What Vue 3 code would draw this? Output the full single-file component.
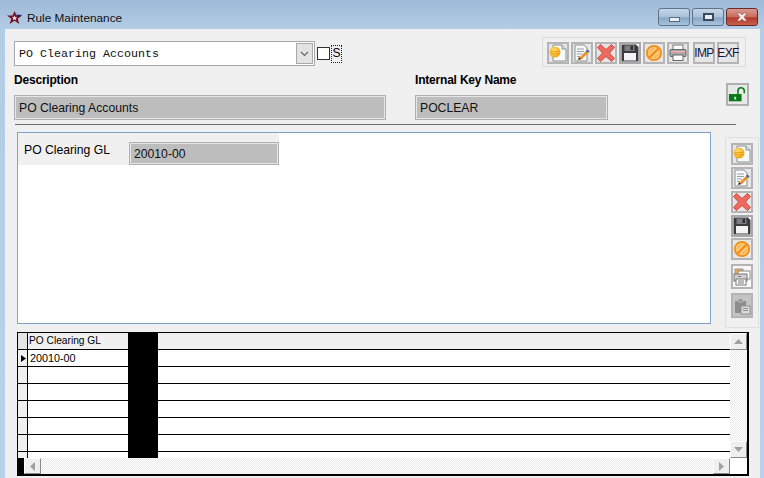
<script setup>
const topTools = [
  { key: 'new' }, { key: 'edit' }, { key: 'del' }, { key: 'save', active: true }, { key: 'cancel' }, { key: 'print' }
]
const sideTools = [
  { key: 'new', cls: 'tall' }, { key: 'edit', cls: 'tall' }, { key: 'del', cls: 'tall' },
  { key: 'save', cls: 'active tall' }, { key: 'cancel', cls: 'tall snug' },
  { key: 'copy', cls: 'big light' }, { key: 'paste', cls: 'big dim' }
]
const rows = ['20010-00', '', '', '', '', '']
</script>

<template>
  <div class="window">
    <header class="titlebar">
      <svg class="logo" width="15" height="15" viewBox="0 0 15 15">
        <path d="M7.500 1l1.900 4.600H15l-4.300 3.200L12.400 14 7.500 10.800 2.600 14l1.700-5.200L0 5.600h5.600z" fill="#7a0e1e" />
        <path d="M7.500 5.200l.8 2h2L8.700 8.500l.6 2-1.800-1.200-1.800 1.200.6-2-1.600-1.300h2z" fill="#e6e6ee" />
        <path d="M8.500 .5l1.200 4.300h5.300l-2.600 2.200-2.700-1.200z" fill="#1c2268" />
      </svg>
      <span class="title">Rule Maintenance</span>
      <div class="controls">
        <button class="ctl"><i class="min"></i></button>
        <button class="ctl"><i class="max"></i></button>
        <button class="ctl close">
          <svg width="14" height="10" viewBox="0 0 14 10"><path d="M2 1h3l2 2 2-2h3L9 5l3 4H9L7 7 5 9H2l3-4z" fill="#f4eeee" stroke="#8a4a44" stroke-width=".5" /></svg>
        </button>
      </div>
    </header>

    <main class="client">
      <div class="top-row">
        <div class="combo">
          <span>PO Clearing Accounts</span>
          <span class="combo-btn">
            <svg width="9" height="6" viewBox="0 0 9 6"><path d="M1 1l3.500 3.500L8 1" fill="none" stroke="#666" stroke-width="1.200" /></svg>
          </span>
        </div>
        <span class="check"></span>
        <span class="check-label">S</span>
        <div class="toolbar">
          <button v-for="t in topTools" :key="t.key" class="tool" :class="{ active: t.active }">
            <svg width="18" height="18" viewBox="0 0 18 18"><use :href="'#ic-' + t.key" /></svg>
          </button>
          <button class="tool text gap">IMP</button>
          <button class="tool text">EXF</button>
        </div>
      </div>

      <div class="field-row">
        <div class="field desc">
          <label>Description</label>
          <div class="ro">PO Clearing Accounts</div>
        </div>
        <div class="field key">
          <label>Internal Key Name</label>
          <div class="ro">POCLEAR</div>
        </div>
        <button class="lock">
          <svg width="21" height="19" viewBox="0 0 21 19">
            <rect x="1" y="9" width="14" height="8" fill="#067a16" />
            <rect x="7" y="12" width="2" height="3" fill="#e8f4e8" />
            <path d="M11 9V5.500a3.500 3.500 0 0 1 7 0V8" fill="none" stroke="#067a16" stroke-width="1.700" />
          </svg>
        </button>
      </div>

      <hr class="rule" />

      <div class="mid-row">
        <section class="panel">
          <div class="panel-field">
            <span class="panel-label">PO Clearing GL</span>
            <div class="ro small">20010-00</div>
          </div>
        </section>
        <aside class="side">
          <button v-for="t in sideTools" :key="t.key" class="tool" :class="t.cls">
            <svg width="18" height="18" viewBox="0 0 18 18"><use :href="'#ic-' + t.key" /></svg>
          </button>
        </aside>
      </div>

      <section class="grid">
        <div class="grid-body">
          <div class="row head">
            <span class="ind"></span>
            <span class="c1">PO Clearing GL</span>
            <span class="c2"></span>
            <span class="c3"></span>
          </div>
          <div v-for="(r, i) in rows" :key="i" class="row">
            <span class="ind"><svg v-if="i === 0" width="5" height="7" viewBox="0 0 5 7"><path d="M0 0l5 3.500L0 7z" fill="#000" /></svg></span>
            <span class="c1 val">{{ r }}</span>
            <span class="c2"></span>
            <span class="c3"></span>
          </div>
          <div class="row tail">
            <span class="ind"></span>
            <span class="c1"></span>
            <span class="c2"></span>
            <span class="c3"></span>
          </div>
        </div>
        <div class="vscroll">
          <span class="sb-btn"><svg width="9" height="5" viewBox="0 0 9 5"><path d="M0 5L4.500 0 9 5z" fill="#a0a0a0" /></svg></span>
          <span class="sb-btn"><svg width="9" height="5" viewBox="0 0 9 5"><path d="M0 0L4.500 5 9 0z" fill="#a0a0a0" /></svg></span>
        </div>
        <div class="hscroll">
          <span class="black-foot"></span>
          <span class="sb-btn"><svg width="5" height="9" viewBox="0 0 5 9"><path d="M5 0L0 4.500 5 9z" fill="#a0a0a0" /></svg></span>
          <span class="sb-btn"><svg width="5" height="9" viewBox="0 0 5 9"><path d="M0 0L5 4.500 0 9z" fill="#a0a0a0" /></svg></span>
        </div>
        <div class="corner"></div>
      </section>
    </main>

    <svg class="defs" width="0" height="0">
      <defs>
        <radialGradient id="coin" cx=".4" cy=".35" r=".7"><stop offset="0" stop-color="#ffe070" /><stop offset="1" stop-color="#f0a010" /></radialGradient>
        <symbol id="ic-new" viewBox="0 0 18 18">
          <path d="M4 1h9l4 4v12H4z" fill="#f6fbfd" stroke="#8a8f94" />
          <path d="M13 1v4h4" fill="#d8e2e8" stroke="#8a8f94" />
          <circle cx="6" cy="8" r="5.500" fill="url(#coin)" />
          <path d="M1.500 7.500h9M1.500 9.500h9" stroke="#e89a10" stroke-width=".8" />
        </symbol>
        <symbol id="ic-edit" viewBox="0 0 18 18">
          <path d="M2 1h9l3 3v13H2z" fill="#f6f9fb" stroke="#8a8f94" />
          <path d="M4 5h7M4 7.500h7M4 10h5M4 12.500h3" stroke="#9aa0a8" />
          <path d="M14.500 5.500l2 2-7.500 7.500-3 1 1-3z" fill="#f09020" />
          <path d="M14.500 5.500l2 2-1.500 1.500-2-2z" fill="#2a70c8" />
          <path d="M6 13l-1 3 3-1z" fill="#402010" />
        </symbol>
        <symbol id="ic-del" viewBox="0 0 18 18">
          <path d="M.5 3.500L3.500.5 9 5.500l5.500-5L17.500 3.500 12.500 9l5 5.500-3 3L9 12.500l-5.500 5-3-3L5.500 9z" fill="#ef6a5e" stroke="#cc4a40" />
        </symbol>
        <symbol id="ic-save" viewBox="0 0 18 18">
          <path d="M.5.5h14.500l2.500 2.500v14.500H.5z" fill="#3c3c40" />
          <rect x="3.500" y="1.500" width="10" height="5.500" fill="#7e7e82" />
          <rect x="9.500" y="2" width="2.500" height="4" fill="#303034" />
          <rect x="3" y="9" width="12" height="7.500" fill="#f4f4f4" />
        </symbol>
        <symbol id="ic-cancel" viewBox="0 0 18 18">
          <circle cx="9" cy="9" r="7.200" fill="#fcc878" stroke="#f28c14" stroke-width="1.800" />
          <path d="M4.500 13.500l9-9" stroke="#f28c14" stroke-width="2.200" />
          <path d="M4 8.500l4.500-4.500M9.500 14l4.500-4.500" stroke="#f7a63c" />
        </symbol>
        <symbol id="ic-print" viewBox="0 0 18 18">
          <rect x="4" y="1" width="10" height="5" fill="#fff" stroke="#777" />
          <rect x="1" y="5.500" width="16" height="7" rx="1" fill="#a8a8a8" stroke="#666" />
          <rect x="2" y="7" width="14" height="1.500" fill="#f0a8a8" />
          <rect x="4" y="11" width="10" height="5.500" fill="#fff" stroke="#666" />
        </symbol>
        <symbol id="ic-copy" viewBox="0 0 18 18">
          <rect x="2" y="1" width="8" height="5" fill="#f4a848" stroke="#999" />
          <rect x="5" y="3" width="12" height="8" fill="#fff" stroke="#888" />
          <rect x="1" y="6" width="13" height="7" fill="#d0d0d0" stroke="#777" />
          <rect x="3" y="11" width="10" height="6" fill="#fff" stroke="#777" />
          <path d="M5 8.500h3M5 13h6M5 15h6" stroke="#777" />
        </symbol>
        <symbol id="ic-paste" viewBox="0 0 18 18">
          <path d="M2 4h11v12H2z" fill="#8e8e8e" />
          <rect x="5" y="2" width="5" height="3" rx="1" fill="#8e8e8e" stroke="#bdbdbd" />
          <rect x="8" y="9" width="9" height="8" fill="#dcdcdc" stroke="#8e8e8e" />
          <path d="M10 11.500h5M10 13.500h5" stroke="#8e8e8e" />
        </symbol>
      </defs>
    </svg>
  </div>
</template>

<style scoped>
* { box-sizing: border-box; }
.window {
  width: 764px; height: 478px; overflow: hidden; display: flex; flex-direction: column;
  background: linear-gradient(180deg, #9db9d6 0, #b4cde6 29px, #b9d1ea 100%);
  font-family: "Liberation Sans", Arial, sans-serif; font-size: 12px; color: #000;
}
.defs { position: absolute; }
button { padding: 0; margin: 0; font: inherit; }

.titlebar { height: 29px; flex: none; display: flex; align-items: flex-start; padding-left: 7px; }
.logo { margin-top: 10px; }
.title { margin: 11px 0 0 5px; font-size: 11.800px; line-height: 14px; color: #111; }
.controls { margin-left: auto; margin-right: 6px; margin-top: 8px; display: flex; gap: 2px; }
.ctl {
  width: 32px; height: 18px; display: flex; align-items: center; justify-content: center;
  border: 1px solid #5f7488; border-radius: 3px;
  background: linear-gradient(180deg, #c4d6e8 0, #a9c1d8 50%, #88a6c3 55%, #a7c3dd 100%);
}
.ctl.close { border-color: #6a2a28; background: linear-gradient(180deg, #d99a90 0, #c86a5c 50%, #b03a28 55%, #c8604c 100%); }
.min { width: 11px; height: 5px; margin-top: 4px; background: #e8eef4; border: 1px solid #5a6a7c; }
.max { width: 11px; height: 8px; background: #e8eef4; border: 2px solid #3a4a5c; display: block; }

.client { flex: 1; min-height: 0; margin: 0 4px 0 5px; background: #f0f0f0; padding: 8px 0 0 9px; }

.top-row { display: flex; align-items: center; height: 30px; }
.combo {
  width: 301px; height: 25px; margin-top: 3px; background: #fff; border: 1px solid #a8a8a8;
  display: flex; align-items: center; justify-content: space-between; padding: 0 1px 0 4px;
  font-family: "Liberation Mono", "Courier New", monospace; font-size: 11.670px; color: #111;
}
.combo-btn { width: 17px; height: 21px; background: #e3e3e3; border: 1px solid #a9a9a9; display: flex; align-items: center; justify-content: center; }
.check { width: 13px; height: 13px; margin: 3px 0 0 2px; background: #fff; border: 1px solid #333; }
.check-label { margin: 3px 0 0 1px; width: 11px; height: 18px; line-height: 16px; text-align: center; outline: 1px dotted #222; outline-offset: -1px; font-size: 12px; }

.toolbar {
  margin-left: auto; margin-right: 14px; width: 204px; height: 30px; border: 1px solid #dcdcdc;
  display: flex; align-items: center; gap: 2px; padding: 1px 0 0 4px;
}
.tool {
  width: 22px; height: 22px; flex: none; display: flex; align-items: center; justify-content: center;
  background: #e6e6e6; border: 2px solid #b4b4b4;
}
.tool.active { background: #fdfdfd; border-color: #a8a8a8; }
.tool.text { background: #e6e6e6; font-size: 12px; letter-spacing: -.6px; color: #14143c; }
.tool.gap { margin-left: 2px; }

.field-row { display: flex; margin-top: 5px; height: 51px; }
.field label { display: block; margin-top: 1px; font-weight: bold; font-size: 12px; line-height: 14px; letter-spacing: -.2px; color: #000; }
.field.desc { width: 401px; }
.field.key { width: 311px; }
.ro {
  margin-top: 8px; height: 25px; background: #bdbdbd; border: 2px solid #e6e6e6; outline: 1px solid #b0b0b0; outline-offset: -1px;
  padding: 0 3px; line-height: 23px; font-size: 12.200px; color: #111;
}
.desc .ro { width: 372px; }
.key .ro { width: 193px; }
.lock { width: 23px; height: 23px; margin-top: 11px; display: flex; align-items: center; justify-content: center; background: #e8e8e8; border: 2px solid #b0b0b0; }

.rule { margin: 1px 0 0 1px; width: 721px; height: 1px; background: #6e6e6e; border: 0; }

.mid-row { display: flex; margin-top: 7px; margin-left: 3px; height: 196px; }
.panel { width: 694px; height: 192px; background: #fff; border: 1px solid #7fa3c6; }
.panel-field { width: 261px; height: 32px; background: #f0f0f0; padding: 0 0 0 6px; display: flex; align-items: flex-start; }
.panel-label { width: 105px; margin-top: 9px; line-height: 16px; font-size: 12.200px; }
.ro.small { margin-top: 9px; width: 150px; height: 23px; line-height: 20px; padding-left: 3px; }

.side {
  width: 34px; height: 191px; margin: 5px 0 0 14px; border: 1px solid #e0e0e0;
  display: flex; flex-direction: column; align-items: flex-start; padding: 5px 0 0 5px; gap: 2px;
}
.side .tall { height: 22px; }
.side .snug { margin-top: -1px; }
.side .big { height: 25px; margin-top: 2px; }
.side .light { background: #f8f8f8; }
.side .dim { background: #c4c4c4; }

.grid {
  margin: 4px 0 0 3px; width: 732px; height: 144px; background: #fff; border: 1px solid #000; border-width: 1px 2px 2px 1px;
  display: grid; grid-template-columns: 712px 17px; grid-template-rows: 125px 16px;
}
.grid-body { overflow: hidden; }
.row { display: flex; height: 17px; border-bottom: 1px solid #000; line-height: 16px; font-size: 10.200px; }
.row.head { background: #f0f0f0; }
.row.tail { border-bottom: 0; }
.ind { width: 10px; flex: none; background: #f0f0f0; border-right: 1px solid #000; display: flex; align-items: center; justify-content: flex-end; padding-right: 1px; }
.head .ind { background: #e4e4e4; }
.c1 { width: 100px; flex: none; padding-left: 1px; }
.c1.val { padding-left: 2px; font-size: 10.800px; }
.c2 { width: 30px; flex: none; background: #000; margin-bottom: -1px; }
.c3 { flex: 1; }
.vscroll, .hscroll { background-color: #f1f1f1; background-image: repeating-conic-gradient(#ececec 0 25%, #fff 0 50%); background-size: 2px 2px; display: flex; justify-content: space-between; }
.vscroll { flex-direction: column; }
.hscroll { align-items: stretch; }
.sb-btn { width: 17px; height: 17px; flex: none; background: #efefef; display: flex; align-items: center; justify-content: center; border: 1px solid; border-color: #fff #8a8a8a #8a8a8a #fff; }
.hscroll .sb-btn { height: 16px; }
.black-foot { width: 6px; flex: none; background: #000; }
.hscroll .sb-btn:nth-child(2) { margin-right: auto; }
.corner { background: #fff; }
</style>
